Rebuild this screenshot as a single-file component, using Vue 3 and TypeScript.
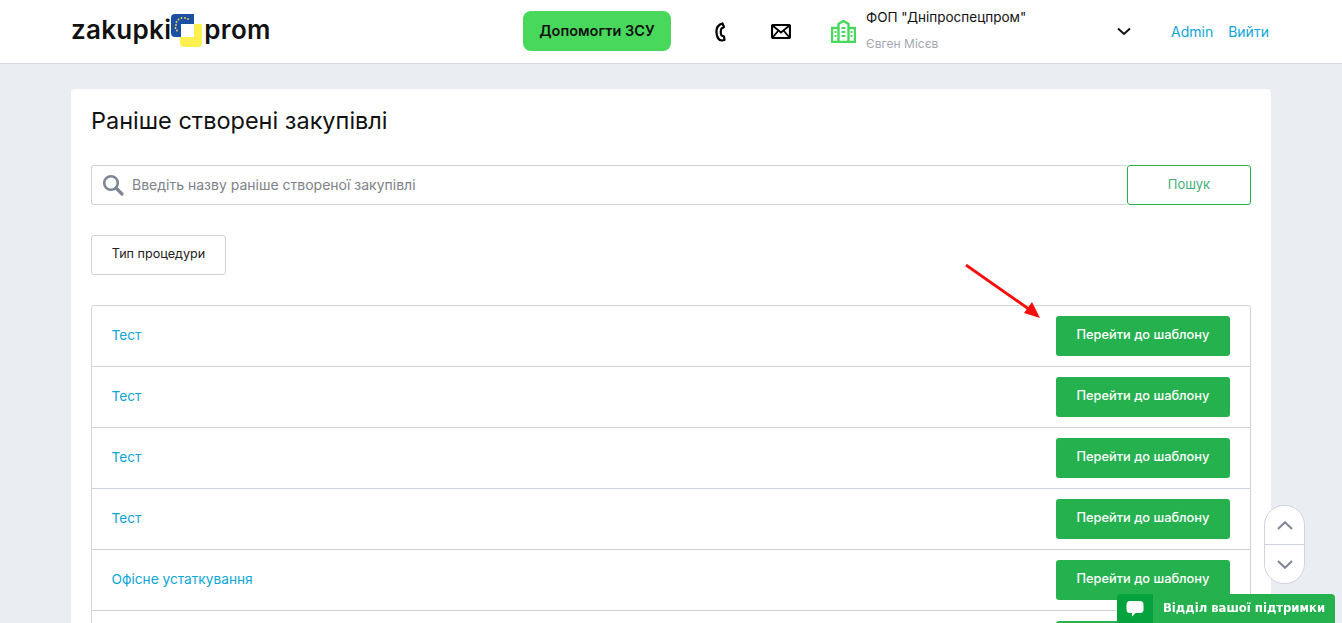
<template>
  <div class="page">
    <header class="topbar">
      <div class="topbar-inner">
        <a class="logo">
          <span>zakupki</span>
          <svg class="logo-mark" width="33" height="34" viewBox="0 0 33 34">
            <path d="M4 0H23V10H10V23H4A4 4 0 0 1 0 19V4A4 4 0 0 1 4 0Z" fill="#1b4fa3" />
            <path d="M23 10H31V29A4 4 0 0 1 27 33H13A4 4 0 0 1 9 29V23H23Z" fill="#fdf04f" />
            <g fill="#f6dc3c">
              <circle v-for="(s, i) in stars" :key="i" :cx="s[0]" :cy="s[1]" r="0.9" />
            </g>
          </svg>
          <span>prom</span>
        </a>
        <button class="help-btn">Допомогти ЗСУ</button>
        <svg class="ico-phone" width="12" height="20" viewBox="0 0 12 20" fill="none" stroke="#000" stroke-width="2.2">
          <path d="M6 2.500L8.500 1.500L10 5L7.500 6.500C6.500 8 6.500 12 7.500 13.500L10 14.500L10.500 18L8 18.500C3 18.500 -0.500 7 6 2.500Z" stroke-linejoin="round" />
        </svg>
        <svg class="ico-mail" width="20" height="15" viewBox="0 0 20 15" fill="none" stroke="#000" stroke-width="2.2">
          <rect x="1" y="1" width="18" height="13" rx="1.500" />
          <path d="M1.500 1.500L10 8.500L18.500 1.500M1.500 13.500L7.500 6.500M18.500 13.500L12.500 6.500" stroke-width="1.800" />
        </svg>
        <svg class="ico-org" width="25" height="23" viewBox="0 0 25 23" fill="none" stroke="#47d85c" stroke-width="2.400">
          <path d="M7.500 22V4L12.500 1L17.500 4V22" />
          <path d="M7.500 8H1V22H24V8H17.500" />
          <path d="M10.500 8H14.500M10.500 12H14.500M10.500 16H14.500M3.500 12H5.500M3.500 16H5.500M19.500 12H21.500M19.500 16H21.500" stroke-width="2" />
        </svg>
        <div class="org">
          <div class="org-name">ФОП "Дніпроспецпром"</div>
          <div class="org-user">Євген Місєв</div>
        </div>
        <svg class="ico-caret" width="14" height="9" viewBox="0 0 14 9" fill="none" stroke="#111" stroke-width="2">
          <path d="M1 1.500L7 7L13 1.500" />
        </svg>
        <a class="nav-link admin">Admin</a>
        <a class="nav-link login">Вийти</a>
      </div>
    </header>

    <main class="card">
      <h1 class="title">Раніше створені закупівлі</h1>

      <div class="search">
        <div class="search-field">
          <svg width="22" height="22" viewBox="0 0 22 22" fill="none" stroke="#7b8794" stroke-width="2.600">
            <circle cx="9" cy="9" r="6.800" />
            <path d="M14 14L20 20" stroke-width="3.200" stroke-linecap="round" />
          </svg>
          <span>Введіть назву раніше створеної закупівлі</span>
        </div>
        <button class="search-btn">Пошук</button>
      </div>

      <button class="filter-btn">Тип процедури</button>

      <div class="list">
        <div v-for="(item, i) in items" :key="i" class="row">
          <a class="row-name">{{ item }}</a>
          <button class="row-btn">Перейти до шаблону</button>
        </div>
      </div>

      <svg class="arrow" width="80" height="60" viewBox="0 0 80 60">
        <path d="M1 1L68 48" stroke="#f80d0d" stroke-width="2.800" />
        <path d="M75 54L59 49L67 38Z" fill="#f80d0d" />
      </svg>
    </main>

    <div class="scroller">
      <button class="scroll-btn">
        <svg width="16" height="9" viewBox="0 0 16 9" fill="none" stroke="#7d8694" stroke-width="2"><path d="M1 8L8 1.200L15 8" /></svg>
      </button>
      <button class="scroll-btn">
        <svg width="16" height="9" viewBox="0 0 16 9" fill="none" stroke="#7d8694" stroke-width="2"><path d="M1 1L8 7.800L15 1" /></svg>
      </button>
    </div>

    <div class="support">
      <span class="support-icon">
        <svg width="18" height="18" viewBox="0 0 18 18">
          <path d="M4 1H14A3.500 3.500 0 0 1 17.500 4.500V9.500A3.500 3.500 0 0 1 14 13H9.500L6 16.500V13H4A3.500 3.500 0 0 1 .5 9.500V4.500A3.500 3.500 0 0 1 4 1Z" fill="#fff" />
        </svg>
      </span>
      <span class="support-text">Відділ вашої підтримки</span>
    </div>
  </div>
</template>

<script setup lang="ts">
const items: string[] = ['Тест', 'Тест', 'Тест', 'Тест', 'Офісне устаткування', 'Тест']

// EU stars on the blue corner of the logo
const stars: number[][] = [
  [5, 11], [5.500, 8], [7.500, 5.500], [10.500, 4], [14, 4], [17, 5],
  [4.500, 14], [6, 16.500],
]
</script>

<style>
html,
body {
  margin: 0;
  height: 100%;
  overflow: hidden;
}
</style>

<style scoped>
.page {
  height: 623px;
  overflow: hidden;
  background: #eaedf1;
  font-family: Inter, "Liberation Sans", sans-serif;
  color: #111;
}

button {
  font-family: inherit;
  cursor: pointer;
}

.topbar {
  height: 63px;
  background: #fff;
  border-bottom: 1px solid #d5d8de;
}

.topbar-inner {
  width: 1200px;
  height: 100%;
  margin: 0 auto;
  display: flex;
  align-items: center;
}

.logo {
  display: flex;
  align-items: center;
  width: 200px;
  flex: none;
  font-size: 26px;
  font-weight: 600;
  letter-spacing: 0.300px;
  color: #111;
  margin-top: -4px;
}

.logo-mark {
  margin: 3px 0 0 0;
  flex: none;
}

.help-btn {
  margin-left: 252px;
  width: 148px;
  height: 40px;
  margin-top: -2px;
  padding-bottom: 2px;
  flex: none;
  border: none;
  border-radius: 8px;
  background: #47d85c;
  color: #111;
  font-size: 14.500px;
  font-weight: 600;
}

.ico-phone {
  margin-left: 43px;
  flex: none;
}

.ico-mail {
  margin-left: 45px;
  flex: none;
}

.ico-org {
  margin-left: 40px;
  flex: none;
}

.org {
  margin-left: 10px;
  width: 251px;
  flex: none;
}

.org-name {
  font-size: 13.500px;
  line-height: 16px;
  margin-top: -4px;
}

.org-user {
  font-size: 12px;
  line-height: 14px;
  margin-top: 12px;
  color: #a3a8b0;
}

.ico-caret {
  flex: none;
}

.nav-link {
  font-size: 14px;
  color: #0ea5d7;
}

.admin {
  margin-left: 40px;
}

.login {
  margin-left: 15px;
}

.card {
  position: relative;
  width: 1160px;
  margin: 25px auto 0;
  padding: 20px 20px 0;
  background: #fff;
  border-radius: 4px;
}

.title {
  margin: 0;
  font-size: 23.500px;
  line-height: 24px;
  font-weight: 400;
  color: #111;
}

.search {
  display: flex;
  height: 40px;
  margin-top: 32px;
}

.search-field {
  flex: 1;
  display: flex;
  align-items: center;
  gap: 8px;
  padding: 0 0 0 10px;
  border: 1px solid #cfd3dc;
  border-right: none;
  border-radius: 3px 0 0 3px;
  font-size: 14px;
  color: #7d8288;
}

.search-field span {
  margin-top: -2px;
}

.search-btn {
  width: 124px;
  padding-bottom: 4px;
  border: 1px solid #26b14f;
  border-radius: 3px;
  background: #fff;
  color: #3fae7a;
  font-size: 13px;
}

.filter-btn {
  display: block;
  width: 135px;
  height: 40px;
  margin-top: 30px;
  padding-bottom: 4px;
  border: 1px solid #cfd3dc;
  border-radius: 3px;
  background: #fff;
  color: #222;
  font-size: 12.600px;
}

.list {
  margin-top: 30px;
  border: 1px solid #cfd3dc;
  border-radius: 3px;
}

.row {
  display: flex;
  align-items: center;
  justify-content: space-between;
  height: 60px;
  padding: 0 20px 0 19.500px;
  border-bottom: 1px solid #cfd3dc;
}

.row-name {
  margin-top: -2px;
  font-size: 13.700px;
  color: #0ea5d7;
}

.row-btn {
  width: 174px;
  height: 40px;
  padding-bottom: 5px;
  border: none;
  border-radius: 3px;
  background: #26b14f;
  color: #fff;
  font-size: 12.800px;
  font-weight: 500;
}

/* annotation drawn over the screenshot */
.arrow {
  position: absolute;
  left: 894px;
  top: 175px;
}

.scroller {
  position: fixed;
  left: 1264px;
  top: 505px;
  width: 41px;
  height: 79px;
  display: flex;
  flex-direction: column;
  border: 1px solid #cfd3dc;
  border-radius: 20px;
  background: #fff;
  box-sizing: border-box;
  overflow: hidden;
}

.scroll-btn {
  flex: 1;
  display: flex;
  align-items: center;
  justify-content: center;
  padding: 0;
  border: none;
  background: none;
}

.scroll-btn + .scroll-btn {
  border-top: 1px solid #cfd3dc;
}

.support {
  position: fixed;
  left: 1117px;
  top: 594px;
  width: 218px;
  height: 29px;
  display: flex;
  background: #26b14f;
  border-radius: 4px 4px 0 0;
  overflow: hidden;
}

.support-icon {
  width: 36px;
  display: flex;
  align-items: center;
  justify-content: center;
  background: #05a23e;
}

.support-text {
  margin-left: 10px;
  font-family: "DejaVu Sans", sans-serif;
  font-size: 11.650px;
  font-weight: 700;
  line-height: 28px;
  color: #fff;
}
</style>
